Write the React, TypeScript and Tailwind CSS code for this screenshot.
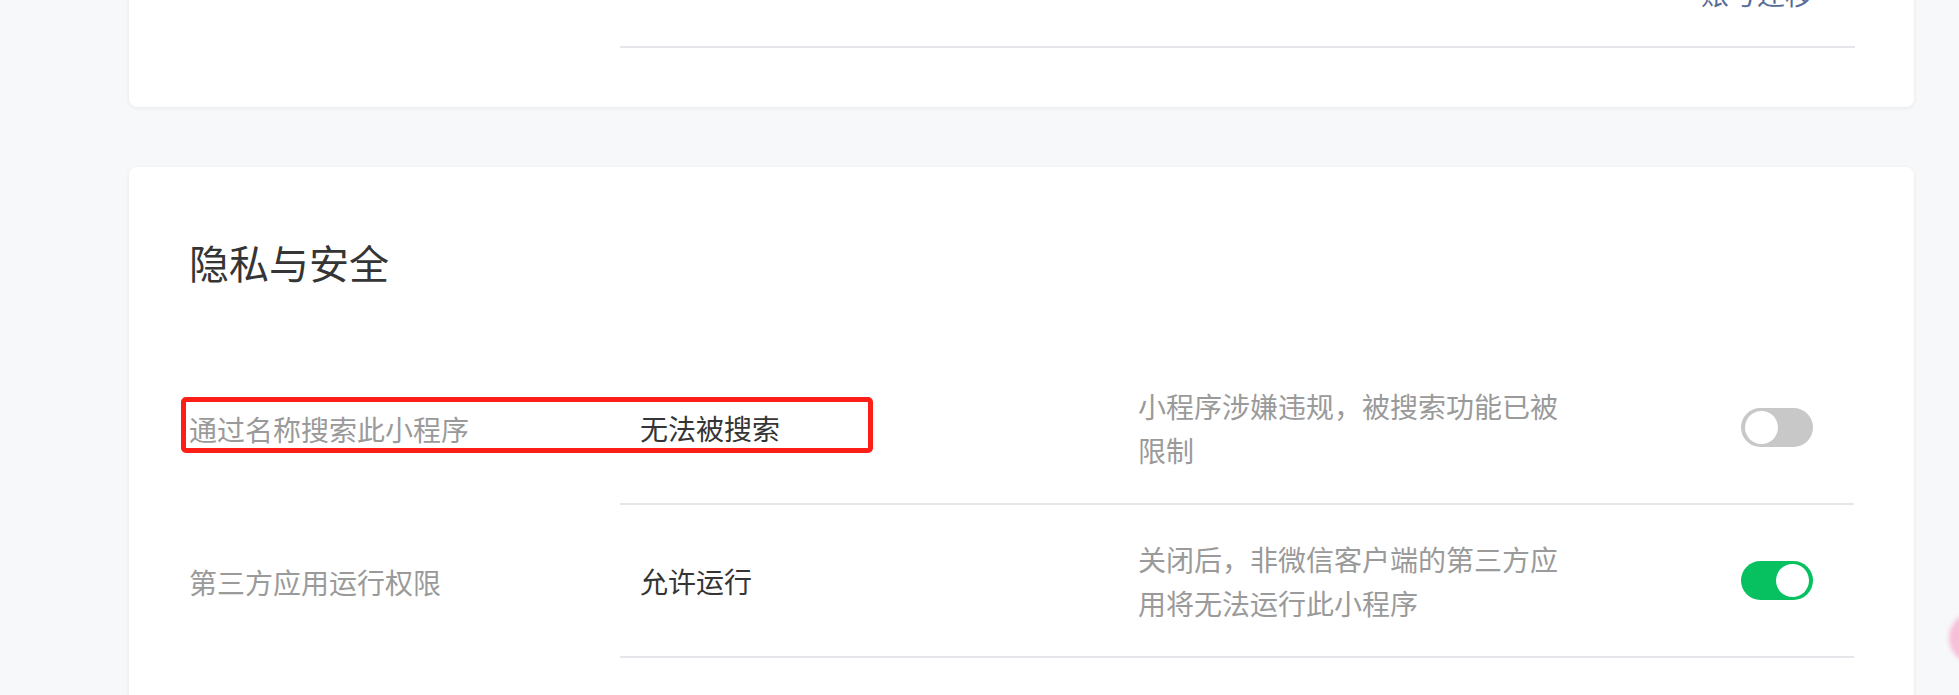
import React from 'react';

function Toggle({ on }: { on: boolean }) {
  return (
    <div
      className={`relative h-[39px] w-[72px] shrink-0 rounded-full ${on ? 'bg-[#07c160]' : 'bg-[#c8c8c8]'}`}
    >
      <div
        className={`absolute top-[3px] h-[33px] w-[33px] rounded-full bg-white ${on ? 'right-[4px]' : 'left-[4px]'}`}
      ></div>
    </div>
  );
}

export default function App() {
  const rows = [
    {
      label: '通过名称搜索此小程序',
      value: '无法被搜索',
      desc: '小程序涉嫌违规，被搜索功能已被限制',
      on: false,
      marked: true,
    },
    {
      label: '第三方应用运行权限',
      value: '允许运行',
      desc: '关闭后，非微信客户端的第三方应用将无法运行此小程序',
      on: true,
      marked: false,
    },
  ];

  return (
    <div className="relative h-[695px] overflow-hidden bg-[#f7f8fa] pl-[129px] pr-[45px] font-['Noto_Sans_CJK_SC',sans-serif]">
      {/* previous card, scrolled mostly out of view */}
      <div className="-mt-[100px] rounded-lg bg-white pb-[59px] pl-[491px] pr-[59px] shadow-[0_1px_4px_rgba(0,0,0,0.07)]">
        <div className="flex justify-end border-b-2 border-[#e5e5ea] pb-[31px] pr-[42px] pt-[71px]">
          <span className="text-[28px] leading-[44px] text-[#576b95]">账号迁移</span>
        </div>
      </div>

      <div className="mt-[60px] rounded-lg bg-white px-[60px] pb-[80px] pt-[67px] shadow-[0_1px_4px_rgba(0,0,0,0.07)]">
        <h3 className="mb-[62px] text-[40px] font-normal leading-[56px] text-[#353535]">隐私与安全</h3>

        {rows.map((row, idx) => (
          <div key={idx} className="relative flex">
            <div className="flex w-[431px] shrink-0 items-center text-[28px] text-[#9a9a9a]">{row.label}</div>
            <div className="flex h-[153px] flex-1 items-center border-b-2 border-[#e5e5ea] pl-[20px] pr-[41px]">
              <div className="w-[498px] shrink-0 text-[28px] text-[#353535]">{row.value}</div>
              <div className="w-[430px] text-[28px] leading-[44px] text-[#9a9a9a]">{row.desc}</div>
              <div className="ml-auto">
                <Toggle on={row.on} />
              </div>
            </div>
            {row.marked && (
              <div className="pointer-events-none absolute left-[-8px] top-[45px] h-[56px] w-[692px] rounded-[5px] border-[5px] border-[#fc1e17]"></div>
            )}
          </div>
        ))}
      </div>

      {/* floating button peeking in at the right edge */}
      <div className="absolute left-[1949px] top-[612px] h-[52px] w-[52px] rounded-full bg-[#f7bfd8] blur-[2px]"></div>
    </div>
  );
}
